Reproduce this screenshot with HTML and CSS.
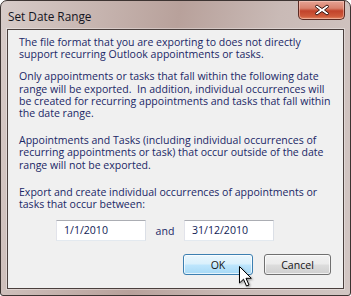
FILE: index.html
```html
<!DOCTYPE html>
<html lang="en">
  <head>
    <meta charset="UTF-8" />
    <title>Set Date Range</title>
    <link rel="stylesheet" href="styles.css">
  </head>
  <body>
    <div class="window">
      <div class="titlebar">
        <div class="title">Set Date Range</div>
        <div class="close">
          <svg width="18" height="12" viewBox="0 0 18 12">
            <path d="M4 1 L9 4.5 L14 1 L16 2.5 L11.5 6 L16 9.5 L14 11 L9 7.5 L4 11 L2 9.5 L6.5 6 L2 2.5 Z" fill="#fff" stroke="#3a1a16" stroke-width="1" stroke-linejoin="round"/>
          </svg>
        </div>
      </div>
      <div class="client">
        <p class="p1">The file format that you are exporting to does not directly support recurring Outlook appointments or tasks.</p>
        <p class="p2">Only appointments or tasks that fall within the following date range will be exported.&nbsp; In addition, individual occurrences will be created for recurring appointments and tasks that fall within the date range.</p>
        <p class="p3">Appointments and Tasks (including individual occurrences of recurring appointments or task) that occur outside of the date range will not be exported.</p>
        <p class="p4">Export and create individual occurrences of appointments or tasks that occur between:</p>
        <div class="dates">
          <div class="field">1/1/2010</div>
          <span class="and">and</span>
          <div class="field">31/12/2010</div>
        </div>
        <div class="buttons">
          <div class="btn ok">OK</div>
          <div class="btn cancel">Cancel</div>
          <!-- mouse pointer sits over the OK button -->
          <svg class="cursor" width="16" height="24" viewBox="0 0 16 24">
            <path d="M1.5 1.5 L1.5 18 L5.5 14.2 L8.5 21 L11 20 L8 13.3 L13.3 13.3 Z" fill="#fff" stroke="#000" stroke-width="1" stroke-linejoin="miter"/>
          </svg>
        </div>
      </div>
    </div>
  </body>
</html>
```
FILE: styles.css
```css
* {
  box-sizing: border-box;
}
body {
  margin: 0;
  background: #fff;
}
.window {
  width: 351px;
  height: 296px;
  border: 1px solid #3d3432;
  border-radius: 7px 7px 3px 3px;
  background: linear-gradient(100deg, #d8ccc9 0%, #c6b4af 25%, #b8a19b 45%, #c9bab6 70%, #d2c6c3 100%);
  display: flex;
  flex-direction: column;
  padding: 0 6px 6px 6px;
  position: relative;
}
.titlebar {
  height: 28px;
  display: flex;
  align-items: flex-start;
  justify-content: space-between;
}
.title {
  font-family: "Open Sans", sans-serif;
  font-size: 11.8px;
  color: #14141e;
  margin-top: 7px;
  margin-left: 1px;
}
.close {
  width: 47px;
  height: 19px;
  margin-right: -1px;
  border: 1px solid #5b2a22;
  border-top: none;
  border-radius: 0 0 5px 5px;
  background: linear-gradient(#e6a394 0%, #d9826d 40%, #c2432b 55%, #cf5a3b 85%, #e48a66 100%);
  box-shadow: inset 0 0 0 1px rgba(255, 220, 210, 0.45);
  display: flex;
  justify-content: center;
  align-items: center;
}
.client {
  flex: 1;
  background: #f0f0f0;
  border: 1px solid #4a3f3d;
  box-shadow: 0 0 0 1px rgba(255, 255, 255, 0.35);
  padding: 6px 12px 0 11px;
  font-family: "Open Sans", sans-serif;
  font-size: 10.55px;
  line-height: 12.2px;
  color: #1a2766;
}
.client p {
  margin: 0;
}
.p2 {
  margin-top: 10px !important;
}
.p3,
.p4 {
  margin-top: 15px !important;
}
.dates {
  display: flex;
  align-items: center;
  margin-top: 10px;
  padding-left: 37px;
}
.field {
  width: 90px;
  height: 21px;
  background: #fff;
  border: 1px solid #abadb3;
  border-color: #abadb3 #dbdfe6 #e3e9ef #e2e3ea;
  padding: 3px 0 0 7px;
  color: #101a55;
}
.and {
  width: 38px;
  text-align: center;
}
.buttons {
  display: flex;
  justify-content: flex-end;
  gap: 11px;
  margin-top: 13px;
  padding-right: 0;
  position: relative;
}
.btn {
  width: 70px;
  height: 21px;
  border-radius: 3px;
  display: flex;
  justify-content: center;
  align-items: center;
  color: #151515;
}
.ok {
  border: 1px solid #3c7fb1;
  background: linear-gradient(#eaf6fd 0%, #d9f0fc 48%, #bee6fd 52%, #a7d9f5 100%);
  box-shadow: inset 0 0 0 1px rgba(255, 255, 255, 0.7);
}
.cancel {
  width: 67px;
  border: 1px solid #707070;
  background: linear-gradient(#f2f2f2 0%, #ebebeb 48%, #dddddd 52%, #cfcfcf 100%);
  box-shadow: inset 0 0 0 1px rgba(255, 255, 255, 0.7);
}
.cursor {
  position: absolute;
  left: 219px;
  top: 11px;
  filter: drop-shadow(1px 1px 1px rgba(0, 0, 0, 0.4));
}
```
